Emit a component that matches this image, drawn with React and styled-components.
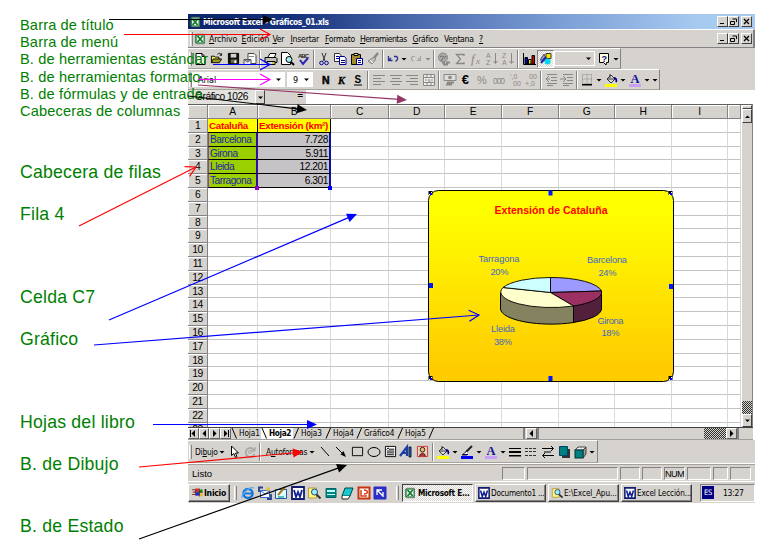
import React from "react";
import styled, { createGlobalStyle, css } from "styled-components";

const GREY = "#d6d3ce";
const UI = `"DejaVu Sans Condensed","DejaVu Sans",sans-serif`;
const ARIAL = `"Liberation Sans",Arial,sans-serif`;

const Global = createGlobalStyle`
  *{box-sizing:border-box}
  body{margin:0;background:#fff;overflow:hidden}
  svg{overflow:visible}
`;

const Page = styled.main`
  position: relative; width: 775px; height: 560px; background: #fff;
  display: grid; grid-template-columns: 188px 567px; align-items: start; padding-top: 14px;
`;
const Notes = styled.aside`
  position: relative; z-index: 3; padding: 3px 0 0 20px; color: #008000;
  font-family: ${ARIAL}; white-space: nowrap;
`;
const SmallNote = styled.p`margin: 0; font-size: 14.6px; line-height: 17.2px; height: 17.2px; letter-spacing: .14px;`;
const BigNote = styled.p`margin: ${p => p.$gap}px 0 0; font-size: 17.7px; line-height: 20px; letter-spacing: .2px;`;

const Window = styled.section`width: 567px; height: 488px; display: flex; flex-direction: column; font-family: ${UI}; font-size: 8.5px; color: #000;`;

const TitleBar = styled.header`
  height: 15px; flex: none; display: flex; align-items: center; padding: 0 3px 0 2px;
  background: linear-gradient(90deg,#0a246a 0%,#14307a 18%,#4766aa 38%,#7c9fd6 66%,#a6caf0 90%);
  color: #fff; font-weight: bold; font-size: 8.4px; letter-spacing: -.35px; gap: 1px; white-space: pre;
`;
const Spring = styled.div`flex: 1;`;
const WinButtons = styled.div`display: flex; & > :last-child{margin-left:2px}`;
const WinButton = styled.span`
  width: 11px; height: 11px; background: ${GREY}; border: 1px solid; border-color: #fff #404040 #404040 #fff;
  display: grid; place-items: center;
`;
const MenuBar = styled.nav`
  height: 19px; flex: none; background: ${GREY}; display: flex; align-items: center; padding: 0 1px 0 2px;
  border-top: 1px solid #fff; border-bottom: 1px solid #848284; border-right: 2px solid #848284; white-space: nowrap;
`;
const MenuItem = styled.span`width: ${p => p.$w}px; font-size: 8.6px; letter-spacing: ${p => p.$ls || 0}px; u{text-underline-offset:1px}`;
const Grip = styled.i`width: 3px; height: 14px; flex: none; border-left: 1px solid #fff; border-right: 1px solid #848284; margin-right: ${p => p.$r || 0}px;`;

const ToolArea = styled.div`background: ${GREY}; flex: none; height: ${p => p.$h}px; display: flex;`;
const Toolbar = styled.div`
  width: ${p => p.$w}px; height: 100%; display: flex; align-items: center; padding-left: 1px;
  border-top: 1px solid #fff; border-bottom: 1px solid #a5a29c; border-right: 1px solid #848284; font-size: 8.4px;
`;
const Slot = styled.span`
  width: ${p => p.$w}px; flex: none; height: 18px; display: flex; align-items: center; justify-content: center;
  svg{display:block;flex:none}
  ${p => p.$on && css`background: repeating-conic-gradient(#fff 0 25%,${GREY} 0 50%) 0 0/2px 2px; border:1px solid;border-color:#848284 #fff #fff #848284;`}
`;
const Bar = styled.i`width: 2px; height: 18px; flex: none; margin: 0 1px; border-left: 1px solid #848284; border-right: 1px solid #fff;`;
const Field = styled.span`
  width: ${p => p.$w}px; height: 15px; flex: none; display: flex; align-items: center; justify-content: space-between;
  border: 1px solid #fff; padding: 0 2px 0 5px; background: ${p => (p.$flat ? GREY : "#fff")}; margin-right: ${p => p.$r || 0}px; font-size: 9px;
`;
const Caption = styled.span`width: ${p => p.$w}px; flex: none; white-space: nowrap; letter-spacing: ${p => p.$ls || 0}px; padding-left: ${p => p.$l || 0}px;`;

const FormulaRow = styled.div`height: 14px; flex: none; display: flex; width: 118px; background: ${GREY};`;
const NameBox = styled.span`width: 67px; background: #e4e2de; font: 10.2px/14px ${ARIAL}; padding-left: 7px; letter-spacing: -.45px; white-space: nowrap;`;
const NameDrop = styled.span`width: 10px; border: 1px solid; border-color: #fff #404040 #404040 #fff; display: grid; place-items: center; margin-right: 32px;`;

const SheetArea = styled.div`width: 565px; height: 323px; flex: none; display: flex; border-top: 1px solid #606060; border-right: 1px solid #848284; position: relative;`;
const Sheet = styled.div`
  width: 553px; height: 322px; overflow: hidden; display: grid;
  grid-template-columns: 20px 50px 73px 58px 56px 57px 57px 56px 57px 56px 13px;
  grid-template-rows: 14px; grid-auto-rows: 13.8px; font: 10.2px/13px ${ARIAL};
`;
const Head = styled.div`
  background: ${GREY}; border-right: 1px solid #848284; border-bottom: 1px solid #848284;
  box-shadow: inset 1px 1px #fff; text-align: center; line-height: 14px; font-size: 10.3px; letter-spacing: -.5px;
`;
const Cell = styled.div`
  border-right: 1px solid #d8d8d8; border-bottom: 1px solid #c4c4c4; padding: 0 1px; white-space: nowrap; letter-spacing: -.05px;
  ${p => p.$kind && css`border-color:#000;`}
  ${p => p.$kind === "title" && css`background:#ff0;color:#f00;font-weight:bold;font-size:9.8px;letter-spacing:-.3px;line-height:14px;border-width:0 1px 1px 0;`}
  ${p => p.$kind === "name" && css`background:#9acf00;color:#2424a8;letter-spacing:-.5px;line-height:14px;border-right:2px solid #30109a;border-left:1px solid #93c;`}
  ${p => p.$kind === "value" && css`background:#c6c3c6;text-align:right;letter-spacing:-.45px;line-height:14px;border-right:2px solid #1010a0;`}
`;
const Handle = styled.i`position: absolute; width: 4px; height: 4px; left: ${p => p.$x}px; top: ${p => p.$y}px; background: ${p => p.$c};`;
const VScroll = styled.div`width: 11px; display: flex; flex-direction: column; background: ${GREY}; border-left: 1px solid #fff;`;
const VButton = styled.span`
  height: ${p => p.$h}px; flex: none; border: 1px solid; border-color: #fff #404040 #404040 #fff; display: grid; place-items: center;
`;
const Checker = styled.span`width: ${p => p.$w}px; height: ${p => p.$h}px; flex: none; background: repeating-conic-gradient(#303030 0 25%,#d6d3ce 0 50%) 0 0/2px 2px;`;
const ChartBox = styled.div`position: absolute; left: 239px; top: 84px; width: 247px; height: 193px; svg{display:block}`;

const Tabs = styled.div`width: 565px; height: 13px; flex: none; display: flex; background: ${GREY}; align-items: stretch; font-size: 8.2px; border-bottom: 1px solid #a0a0a0; border-top: 1px solid #404040;`;
const NavButton = styled.span`width: ${p => p.$w || 11}px; flex: none; display: grid; place-items: center; border: 1px solid; border-color: #fff #606060 #606060 #fff;`;
const Tab = styled.span`
  width: ${p => p.$w}px; flex: none; display: flex; gap: 2px; line-height: 11px; white-space: nowrap; letter-spacing: ${p => (p.$on ? -0.35 : -0.1)}px;
  font-weight: ${p => (p.$on ? "bold" : "normal")}; background: ${p => (p.$on ? "#fff" : GREY)};
  svg{flex:none}
`;
const Track = styled.span`width: ${p => p.$w}px; flex: none; border-left: 2px solid #848284;`;

const Status = styled.footer`height: 17px; flex: none; margin-top:1px; background: ${GREY}; display: flex; align-items: center; padding-left: 4px; font: 9.5px ${ARIAL}; border-top: 1px solid #a5a29c;`;
const StatusCell = styled.span`width: ${p => p.$w}px; height: 13px; margin-right: ${p => p.$r || 2}px; border: 1px solid; border-color: #848284 #fff #fff #848284; display: flex; justify-content: center; line-height: 12px; font-size: 9.2px; white-space:nowrap; letter-spacing:-.6px;`;
const Taskbar = styled.div`height: 22px; flex: none; background: ${GREY}; border-top: 1px solid #fff; display: flex; align-items: center;`;
const Start = styled.span`width: 42px; height: 18px; border: 1px solid; border-color: #fff #404040 #404040 #fff; display: flex; align-items: center; padding-left: 3px; gap: 1px; font-weight: bold; font-size: 8.6px; letter-spacing: -.25px; margin-right: 4px; box-shadow: inset -1px -1px #848284;`;
const Task = styled.span`
  width: 71px; flex: none; height: 18px; margin-right: 2px; display: flex; align-items: center; gap: 1px; padding-left: 2px; white-space: nowrap;
  border: 1px solid; border-color: #fff #404040 #404040 #fff; box-shadow: inset -1px -1px #848284; font-size: 8.2px; letter-spacing: ${p => p.$ls || 0}px;
  ${p => p.$on && css`font-weight:bold;border-color:#404040 #fff #fff #404040;box-shadow:none;background:repeating-conic-gradient(#fff 0 25%,${GREY} 0 50%) 0 0/2px 2px;`}
  svg{flex:none}
`;
const Tray = styled.span`width: 55px; height: 18px; margin-left: 6px; border: 1px solid; border-color: #848284 #fff #fff #848284; display: flex; align-items: center; padding-left: 1px; gap: 9px; letter-spacing: -.3px;`;
const Lang = styled.span`width: 12px; height: 13px; background: #000084; color: #fff; font: 7.5px/13px ${UI}; text-align: center; letter-spacing: -.3px;`;
const Overlay = styled.svg`position: absolute; left: 0; top: 0; z-index: 4; pointer-events: none;`;

const G = "#8a8884";
const P = (d, s = "#000", f = "none", w = 1) => <path d={d} stroke={s} fill={f} strokeWidth={w} />;
const lines = (rows, c = G) => rows.map(([x, y, w], i) => <rect key={i} x={x} y={y} width={w} height="1" fill={c} />);
const letter = (t, x, y, size, fill, extra = {}) => (
  <text x={x} y={y} fontSize={size} fill={fill} fontFamily="Liberation Serif" {...extra}>{t}</text>
);
const tiny = (t, x, y, size = 7) => <text x={x} y={y} fontSize={size} fill={G} fontFamily="Liberation Sans">{t}</text>;
const sheetIcon = <>{P("M2 1.5h9v11h-9z", "#666", "#fff")}{P("M3 3.5l6 7M9 3.5l-6 7", "#087c28", "none", 2)}{P("M.5 2.5h10v9H.5z", "#087c28")}</>;

const icons = {
  excel: sheetIcon,
  new: P("M3 1.5h6l3 3v8H3zM9 1.5v3h3", "#000", "#fff"),
  open: <>{P("M1.5 11.5v-7h3l1 1h4v2", "#000", "#f8f060")}{P("M1.5 11.5l2-4h9l-2.5 4z", "#000", "#a09a20")}{P("M8 2.5c2-2 4-1 4 1M10.5 3.5h2v-2")}</>,
  save: <>{P("M1.5 1.5h11v11h-11z", "#000", "#101010")}<rect x="4" y="2" width="6" height="4" fill={GREY} /><rect x="4" y="8" width="7" height="4" fill="#676740" /><rect x="8" y="9" width="2" height="3" fill="#fff" /></>,
  mail: <>{P("M5 1.5h6l2 2v8H5z", "#444", "#fff")}{P("M1 7.5h7v5H1zM1 7.5l3.5 2.5L8 7.5", "#555", "#e8e8f8")}{P("M6 4.5h5", "#888")}</>,
  print: <>{P("M4 5l2-3.5h6L10.5 5", "#000", "#fff")}{P("M1 5.5h11l1 1v4H1z", "#000", "#c0c0b8")}{P("M3 9.5h8v3H3z", "#000", "#ddd")}{P("M8 11h2", "#cc0", "none", 1.5)}</>,
  preview: <>{P("M1.5 .5h6l3 3v9h-9z", "#000", "#fff")}<circle cx="9" cy="7.5" r="3" fill="#aee" stroke="#000" />{P("M11 10l3 3", "#000", "none", 2)}</>,
  spell: <><text x="1" y="5.5" fontSize="6" fontWeight="bold" fontFamily="Liberation Sans" fill="#222" textLength="11">ABC</text>{P("M3 8l3 4 5-6", "#2828b0", "none", 2)}</>,
  cut: <>{P("M5 1l3 8M9 1L6 9", "#333")}<circle cx="4.5" cy="11" r="1.8" fill="none" stroke="#000090" /><circle cx="9.5" cy="11" r="1.8" fill="none" stroke="#000090" /></>,
  copy: <>{P("M1.5 1.5h5l1.5 2v6H1.5z", "#333", "#fff")}{P("M6.5 4.5h5l1.5 2v6H6.5z", "#000090", "#fff")}{P("M3 4.5h3M3 6.5h3M8 8.5h4M8 10.5h4", "#000090")}</>,
  paste: <>{P("M1.5 2.5h9v10h-9z", "#000", "#a58e28")}{P("M4 1.5h4v2H4z", "#000", "#ee6")}{P("M6.5 6.5h6v6h-6z", "#000090", "#fff")}{P("M8 8.5h3M8 10.5h3", "#000090")}</>,
  brush: <>{P("M12 1L8 6", G, "none", 2.5)}{P("M8 5l2 2-4 5-4-3z", G, "#bbb")}{P("M4 8l3 3", "#fff")}</>,
  undo: P("M2.5 4v4.5h4M3 8l2-2M8 4.5h2.5l1 1v2l-2 2", "#283090", "none", 1.3),
  redo: P("M11.5 4v4.5h-4M11 8L9 6M6 4.5H3.5l-1 1v2l2 2", "#a8a6a2", "none", 1.2),
  globe: <><circle cx="6" cy="5.5" r="4.5" fill="#aaa" stroke={G} />{P("M3 5c2-3 5 3 6-1M4 9l2-3", "#666")}{P("M5 10.5h3m1 0h4M6 12.5h5", G, "none", 2)}</>,
  sigma: P("M11 4V2.5H3.5L7.5 7l-4 4.5H11V10", G, "none", 1.3),
  fx: <>{letter("f", 2, 11, 13, G, { fontStyle: "italic" })}{letter("x", 7, 12, 9, G, { fontStyle: "italic" })}</>,
  az: <>{tiny("A", 1, 6)}{tiny("Z", 1, 13)}{P("M10.5 1v10M8.5 9l2 2.5 2-2.5", G)}</>,
  za: <>{tiny("Z", 1, 6)}{tiny("A", 1, 13)}{P("M10.5 1v10M8.5 9l2 2.5 2-2.5", G)}</>,
  chart: <>{P("M1.5 1v11.5H14", "#000")}{P("M3 5.5h2.5V12H3z", "#000", "#00c")}{P("M6.5 7.5H9V12H6.5z", "#000", "#ee0")}{P("M10 3.5h2.5V12H10z", "#000", "#c00")}</>,
  draw: <>{P("M7 1.5h5v5H7z", "#333", "#f5e800")}{P("M1 8l4-6 3 6z", "#555", "#99c")}<circle cx="8.5" cy="9.5" r="3" fill="#00d8e8" />{P("M2 11l5-6", "#22a", "none", 2)}</>,
  help: <>{P("M2.5 1.5h9v9l-2 0-.5 2.5-2.5-2.5h-4z", "#000", "#fffde0")}<text x="4.5" y="9.5" fontSize="9" fontWeight="bold" fill="#00008b" fontFamily="Liberation Sans">?</text></>,
  left: lines([[1, 2, 12], [1, 5, 8], [1, 8, 12], [1, 11, 8]]),
  center: lines([[1, 2, 12], [3, 5, 8], [1, 8, 12], [3, 11, 8]]),
  right: lines([[1, 2, 12], [5, 5, 8], [1, 8, 12], [5, 11, 8]]),
  merge: <>{P("M1.5 1.5h11v11h-11zM1.5 4.5h11M1.5 9.5h11M5 1.5v3M9 1.5v3M5 9.5v3M9 9.5v3", G, "#eee")}{P("M3 7h2M9 7h2", G)}{tiny("a", 5.5, 9, 5.5)}</>,
  money: <>{P("M1 1.5h12v6H1z", G, "#ddd")}<circle cx="7" cy="4.5" r="1.8" fill={G} />{P("M4 9.5h7M3 11.5h6", G, "none", 1.8)}</>,
  euro: <text x="2" y="12" fontSize="14" fontWeight="bold" fontFamily="Liberation Sans">€</text>,
  pct: tiny("%", 2, 11, 11),
  thousand: <text x="1" y="10.5" fontSize="8.5" textLength="12" fill={G} fontFamily="Liberation Sans">000</text>,
  inc: <>{tiny("‘,0", 2, 6)}{tiny("00", 5, 13)}</>,
  dec: <>{tiny("00", 5, 6)}{tiny("+,0", 1, 13)}</>,
  outdent: <>{lines([[3, 1, 10], [7, 4, 6], [7, 7, 6], [3, 10, 10], [3, 12, 6]])}{P("M5 3L2 6l3 3M2 6h4", G)}</>,
  indent: <>{lines([[3, 1, 10], [7, 4, 6], [7, 7, 6], [3, 10, 10], [3, 12, 6]])}{P("M3 3l3 3-3 3M0 6h6", G)}</>,
  borders: <><path d="M2.5 1.5h9v9h-9zM7 1.5v9M2.5 6h9" stroke={G} fill="none" strokeDasharray="1 1" /><rect x="2" y="11" width="10" height="1.5" /></>,
  bucket: <>{P("M3 6l4-4 4 4-4 4z", "#333", "#ddd")}{P("M6 5V1M3 6h8", "#333")}{P("M10 5c2 0 3 2 2 4", "#000090", "none", 1.8)}<rect x="1" y="11" width="12" height="3" fill="#ff0" /></>,
  pen: <>{P("M12 1L6 7", "#222", "none", 2)}{P("M7 6L2 10h5", "#222", "#fff")}{P("M3 9.5h5", "#000090")}<rect x="1" y="11" width="12" height="3" fill="#00f" /></>,
  fontA: <>{letter("A", 2.5, 10, 12.5, "#12129a", { fontWeight: "bold" })}<rect x="1" y="11" width="12" height="3" fill="#c8a0f8" /></>,
  bold: <text x="3" y="10.8" fontSize="10.5" fontWeight="bold" fontFamily="Liberation Sans" stroke="#000" strokeWidth=".5">N</text>,
  italic: <text x="3" y="10.8" fontSize="10.5" fontWeight="bold" fontStyle="italic" fontFamily="Liberation Serif" stroke="#000" strokeWidth=".3">K</text>,
  under: <><text x="3.5" y="10" fontSize="10" fontWeight="bold" fontFamily="Liberation Sans">S</text><rect x="3" y="11.5" width="8" height="1" /></>,
  dd: <path d="M4.5 6h5L7 8.5z" />,
  ddg: <path d="M4.5 6h5L7 8.5z" fill={G} />,
  pointer: P("M4.5 1v9.5l2.3-2 1.7 4 1.5-.8-1.5-3.7h3z", "#000", "#fff"),
  rotate: <>{P("M11 5A4.5 4.5 0 1 0 11.5 9", "#aaa", "none", 1.8)}{P("M12 2v4H8", "#999")}<circle cx="7" cy="7" r="1.5" fill="none" stroke="#aaa" /></>,
  line: P("M3 2l8 9"),
  arrow: <>{P("M2 2l7 7")}<path d="M12 12L6.5 9.5 9.5 6z" /></>,
  rect: P("M1.5 2.5h11v9h-11z"),
  oval: <ellipse cx="7" cy="7" rx="6" ry="4.5" fill="none" stroke="#000" />,
  textbox: <>{P("M1.5 1.5h11v11h-11z", "#000", "#fff")}{lines([[6, 4, 5], [3, 6, 8], [3, 8, 8], [3, 10, 8]], "#000")}{P("M3 5l1.5-2L6 5", "#000")}</>,
  wordart: <>{P("M1 11L8 2v9M3 8h5", "#1c3ca8", "none", 2.2)}{P("M10 2h2v10h-2z", "#123", "#2c5cc8")}</>,
  clip: <>{P("M1.5 1.5h11v11h-11z", "#c33", "#eecfc0")}{P("M4 12.5c0-5 6-5 6 0", "#222", "#b33")}<circle cx="7" cy="5" r="2.5" fill="#eb6" stroke="#222" /></>,
  weight: <>{lines([[1, 3, 12]], "#000")}<rect x="1" y="6" width="12" height="2" /><rect x="1" y="10" width="12" height="1.5" /></>,
  dash: <path d="M1 3.5h12M1 6.5h12M1 10.5h12" stroke="#333" strokeDasharray="3 1" />,
  arrows: P("M1 3.5h11M10 1l2.5 2.5L10 6M13 10.5H2M4 8l-2.5 2.5L4 13M3 7h7"),
  shadow: <><rect x="5" y="4" width="8" height="9" fill="#333" />{P("M2.5 1.5h8v9h-8z", "#046", "#008080")}</>,
  cube: <>{P("M2 5l3-3h8l-3 3z", "#444", "#eee")}{P("M10 5l3-3v7l-3 4z", "#444", "#999")}<rect x="2" y="5" width="8" height="8" fill="#008080" stroke="#033" /></>,
  flag: <><rect x="5" y="2" width="4" height="4" fill="#e22" /><rect x="10" y="3" width="3.5" height="4" fill="#189a30" /><rect x="5" y="7" width="4" height="4" fill="#22d" /><rect x="10" y="8" width="3.5" height="4" fill="#eb2" />{P("M9.5 2v10M4.5 6.5h9M4.5 2v9", "#000", "none", .8)}{P("M0 3.5h4M1 6.5h3M0 9.5h4", "#933", "none", 1.5)}</>,
  ie: <><circle cx="7" cy="7.5" r="4.5" fill="none" stroke="#1676d8" strokeWidth="2.5" />{P("M4 7.5h7", "#1676d8", "none", 2)}{P("M1 12C0 8 9 0 13 2", "#58a8f0", "none", 1.2)}</>,
  outlook: <>{P("M2.5 4.5h9v7h-9z", "#36c", "#fff")}{P("M2.5 4.5L7 8l4.5-3.5", "#36c")}{P("M1 6V1.5h4M13 8v5H9", "#248", "none", 1.8)}<circle cx="10" cy="3" r="2" fill="#e8c040" /></>,
  desk: <>{P("M1.5 3.5h11v9h-11z", "#25a", "#dff")}{P("M4 9L11 1", "#a72", "none", 2)}{P("M4 11h6", "#3aa", "none", 1.5)}</>,
  word: <>{P("M1 1h12v12H1z", "#111c70", "#fff", 1.8)}{P("M3 4l2 7 2-5 2 5 2-7", "#102090", "none", 1.8)}</>,
  find: <>{P("M1.5 2h8v10h-8z", "#b94", "#fffa80")}<circle cx="7.5" cy="6" r="3" fill="#9ef0f8" stroke="#247" />{P("M9.5 8.5l4 4", "#333", "none", 2)}</>,
  calc: <>{P("M2 2.5h10v9H2z", "#066", "#008484")}<rect x="3" y="4" width="8" height="2" fill="#bff" />{P("M3 8.5h8", "#cff", "none", 1)}</>,
  book: <>{P("M5 2h8l-3 8H2z", "#044", "#18c8d0")}{P("M2 10v3h6l2-3", "#222", "#fff")}</>,
  ppt: <>{P("M1.5 1.5h11v11h-11z", "#c63510", "#fff", 2)}{P("M4 4v6h6M7 4c5 0 4 4 0 4", "#d84018", "none", 1.5)}</>,
  link: <>{P("M1 1h12v12H1z", "#2828c0", "#2c30c8")}{P("M4 9V4h5M4 4l6 6M10 6v5", "#fff", "none", 1.3)}</>,
};
const Icon = ({ n, s = 14 }) => <svg width={s} height={s} viewBox="0 0 14 14">{icons[n]}</svg>;
const Row = ({ items }) => items.map(([n, w, on], i) =>
  n === "|" ? <Bar key={i} /> : <Slot key={i} $w={w} $on={on}><Icon n={n} s={["euro", "open", "save", "textbox", "rect", "clip"].includes(n) ? 13 : 14} /></Slot>
);
const Tri = ({ d = "down", stop }) => {
  const r = { down: 0, left: 90, up: 180, right: 270 }[d];
  return <svg width="7" height="7" viewBox="0 0 7 7"><g transform={`rotate(${r} 3.5 3.5)`}><path d="M0 2h7L3.5 5.5z" />{stop && <rect x="0" y="6" width="7" height="1" />}</g></svg>;
};
const SmallTri = ({ up }) => <svg width="7" height="7" viewBox="0 0 7 7"><path d={up ? "M1 5h5L3.5 2.5z" : "M1 2.5h5L3.5 5z"} /></svg>;
const Controls = () => (
  <WinButtons>
    <WinButton><svg width="7" height="7"><rect x="1" y="5" width="4" height="1" /></svg></WinButton>
    <WinButton><svg width="7" height="7">{P("M2.5 1h4v3M.5 3.5h4v3h-4z")}</svg></WinButton>
    <WinButton><svg width="7" height="7">{P("M1 1l5 5M6 1L1 6", "#000", "none", 1.3)}</svg></WinButton>
  </WinButtons>
);

const menus = [["A", "rchivo", 32.5, "", -.1], ["E", "dición", 31, "", 0], ["V", "er", 18, "", -.3], ["I", "nsertar", 34.5, "", -.2], ["F", "ormato", 35, "", -.3], ["H", "erramientas", 52.5, "", -.5], ["G", "ráfico", 31.5, "", -.3], ["n", "tana", 35, "Ve", -.3], ["?", "", 10, "", 0]];
const data = [["Barcelona", "7.728"], ["Girona", "5.911"], ["Lleida", "12.201"], ["Tarragona", "6.301"]];

const Chart = () => (
  <svg width="247" height="193" viewBox="427 189 247 193" fontFamily="Liberation Sans">
    <defs><linearGradient id="sun" x1="0" y1="0" x2="0" y2="1"><stop offset=".1" stopColor="#ff0" /><stop offset=".92" stopColor="#fc0" /></linearGradient></defs>
    <rect x="428.5" y="190.5" width="245" height="191" rx="10" fill="url(#sun)" stroke="#000" />
    <text x="551" y="214" fontSize="11" fontWeight="bold" fill="#f00" textAnchor="middle" textLength="113" lengthAdjust="spacingAndGlyphs">Extensión de Cataluña</text>
    <path d="M500.5 293v16A50.5 15.5 0 0 0 573.5 322.5V306z" fill="#84825f" stroke="#000" />
    <path d="M573.5 306v16.5A50 15.5 0 0 0 601.5 309V292z" fill="#52203a" stroke="#000" />
    <g stroke="#000" strokeWidth=".9">
      <path d="M550.5 292.5V277.5A50.7 15.5 0 0 1 601.5 291z" fill="#9c9aff" />
      <path d="M550.5 292.5L601.5 291A50.7 15.5 0 0 1 573.5 306z" fill="#9c3063" />
      <path d="M550.5 292.5L573.5 306A50.7 15.5 0 0 1 503 287.5z" fill="#ffffce" />
      <path d="M550.5 292.5L503 287.5A50.7 15.5 0 0 1 550.5 277.5z" fill="#ceffff" />
    </g>
    <g fontSize="9.3" fill="#3f68c4" textAnchor="middle">
      <text x="499" y="262" textLength="41">Tarragona</text><text x="499.5" y="275" textLength="18">20%</text>
      <text x="607" y="262.5" textLength="40">Barcelona</text><text x="607.5" y="275.5" textLength="18">24%</text>
      <text x="503" y="332" textLength="24">Lleida</text><text x="503" y="345" textLength="18">38%</text>
      <text x="610.5" y="324" textLength="26">Girona</text><text x="610.5" y="336" textLength="18">18%</text>
    </g>
    {[[431, 193], [671, 193], [431, 378], [671, 378]].map(([x, y]) => <g key={x + "-" + y}><rect x={x - 2.5} y={y - 2} width="4" height="4" fill="#000" /><path d={`M${x - 2} ${y + 2}l3-3`} stroke="#fff" /><rect x={x - 1} y={y} width="2" height="2" fill="#00f" /></g>)}
    {[[550.5, 193], [550.5, 378.5], [431, 285.5], [671, 286.5]].map(([x, y]) => <rect key={x + "-" + y} x={x - 2} y={y - 2.5} width="4" height="5" fill="#0018ff" />)}
  </svg>
);

const arrowData = [
  [109, 19.5, 273, 19.5, "#000", 1], [124, 34.5, 270, 34.5, "#f00", 0], [213, 64.5, 270, 64.5, "#00f", 0],
  [198, 79.5, 270, 79.5, "#f0f", 0], [198, 85, 407, 100, "#943463", 1], [188, 96, 307, 110, "#000", 1],
  [79, 226, 196, 167, "#f00", 0], [109, 320, 357, 214, "#00f", 1], [94, 345, 479, 315, "#00f", 0],
  [153, 424.5, 317, 424.5, "#00f", 1], [139, 467, 303, 452, "#f00", 1], [139, 539, 347, 465, "#000", 1],
];
const Arrow = ({ a: [x1, y1, x2, y2, c, solid] }) => {
  const ang = (Math.atan2(y2 - y1, x2 - x1) * 180) / Math.PI;
  const len = Math.hypot(x2 - x1, y2 - y1);
  return (
    <g transform={`translate(${x1} ${y1}) rotate(${ang})`} stroke={c} fill="none" strokeWidth="1.2">
      <path d={`M0 0H${len - (solid ? 8 : 0)}`} />
      {solid ? <path d={`M${len} 0l-10-4.5v9z`} fill={c} stroke="none" /> : <path d={`M${len - 10} -5.5L${len} 0l-10 5.5`} />}
    </g>
  );
};
const Slash = ({ back }) => <svg width="6" height="11">{P(back ? "M1 0l4.5 10.5" : "M5.5 0L1 10.5")}</svg>;

export default function App() {
  return (
    <Page>
      <Global />
      <Notes>
        {["Barra de título", "Barra de menú", "B. de herramientas estándar", "B. de herramientas formato", "B. de fórmulas y de entrada", "Cabeceras de columnas"].map(t => <SmallNote key={t}>{t}</SmallNote>)}
        {[["Cabecera de filas", 41.8], ["Fila 4", 22], ["Celda C7", 63], ["Gráfico", 22], ["Hojas del libro", 63], ["B. de Dibujo", 22], ["B. de Estado", 42]].map(([t, g]) => <BigNote key={t} $gap={g}>{t}</BigNote>)}
      </Notes>
      <Window>
        <TitleBar><Icon n="excel" s={12} />Microsoft Excel - Gráficos_01.xls<Spring /><Controls /></TitleBar>
        <MenuBar>
          <Grip /><Slot $w={16}><Icon n="excel" s={12} /></Slot>
          {menus.map(([u, r, w, pre, ls]) => <MenuItem key={u + r} $w={w} $ls={ls}>{pre}<u>{u}</u>{r}</MenuItem>)}
          <Spring /><Controls />
        </MenuBar>
        <ToolArea $h={21}>
          <Toolbar $w={433}>
            <Grip />
            <Row items={[["new", 16], ["open", 17], ["save", 16], ["mail", 17], ["|"], ["print", 17], ["preview", 16], ["spell", 17], ["|"], ["cut", 16], ["copy", 16], ["paste", 17], ["brush", 16], ["|"], ["undo", 15], ["dd", 8], ["redo", 16], ["ddg", 8], ["|"], ["globe", 16], ["sigma", 16], ["fx", 16], ["az", 16], ["za", 16], ["|"], ["chart", 17], ["draw", 17, 1]]} />
            <Field $w={41} $flat><i /><SmallTri /></Field>
            <Row items={[["help", 17], ["dd", 8]]} />
          </Toolbar>
        </ToolArea>
        <ToolArea $h={21}>
          <Toolbar $w={472}>
            <Grip /><Field $w={93} $r={2}>Arial<SmallTri /></Field><Field $w={26} $r={5}>9<SmallTri /></Field>
            <Row items={[["bold", 16], ["italic", 16], ["under", 16], ["|"], ["left", 17], ["center", 17], ["right", 16], ["merge", 17], ["|"], ["money", 17], ["euro", 16], ["pct", 16], ["thousand", 17], ["inc", 16], ["dec", 16], ["|"], ["outdent", 16], ["indent", 16], ["|"], ["borders", 16], ["dd", 8], ["bucket", 16], ["dd", 8], ["fontA", 16], ["dd", 8], ["dd", 8]]} />
          </Toolbar>
        </ToolArea>
        <FormulaRow><NameBox>Gráfico 1026</NameBox><NameDrop><SmallTri /></NameDrop><b>=</b></FormulaRow>
        <SheetArea>
          <Sheet>
            {["", ..."ABCDEFGHI", " "].map((h, i) => <Head key={i}>{h}</Head>)}
            {Array.from({ length: 23 }, (_, r) => (
              <React.Fragment key={r}>
                <Head>{r + 1}</Head>
                {Array.from({ length: 10 }, (_, c) => {
                  if (r === 0 && c < 2) return <Cell key={c} $kind="title">{c ? "Extensión (km²)" : "Cataluña"}</Cell>;
                  if (r > 0 && r < 5 && c < 2) return <Cell key={c} $kind={c ? "value" : "name"}>{data[r - 1][c]}</Cell>;
                  return <Cell key={c} />;
                })}
              </React.Fragment>
            ))}
          </Sheet>
          <VScroll>
            <VButton $h={4} /><VButton $h={14}><SmallTri up /></VButton><Spring /><Checker $w={10} $h={13} /><VButton $h={13}><SmallTri /></VButton>
          </VScroll>
          <Handle $x={67} $y={81} $c="#90c" /><Handle $x={140} $y={81} $c="#00f" />
          <ChartBox><Chart /></ChartBox>
        </SheetArea>
        <Tabs>
          <NavButton><Tri d="left" stop /></NavButton><NavButton $w={10}><Tri d="left" /></NavButton><NavButton $w={11}><Tri d="right" /></NavButton><NavButton $w={11}><Tri d="right" stop /></NavButton>
          <Tab $w={30}><Slash back />Hoja1</Tab><Tab $w={32} $on><Slash back />Hoja2</Tab>
          <Tab $w={32}><Slash />Hoja3</Tab><Tab $w={31}><Slash />Hoja4</Tab><Tab $w={41}><Slash />Gráfico4</Tab><Tab $w={31}><Slash />Hoja5</Tab>
          <Tab $w={95}><Slash /></Tab>
          <Track $w={3} /><NavButton $w={11}><Tri d="left" /></NavButton><Track $w={167} /><Checker $w={22} $h={11} /><NavButton $w={11}><Tri d="right" /></NavButton><Track $w={3} />
        </Tabs>
        <ToolArea $h={23}>
          <Toolbar $w={410}>
            <Grip $r={3} /><Caption $w={22} $ls={-.25}>Di<u>b</u>ujo</Caption>
            <Row items={[["dd", 9], ["pointer", 16], ["rotate", 16], ["|"]]} />
            <Caption $w={46} $l={4} $ls={-.25}>A<u>u</u>toformas</Caption>
            <Row items={[["dd", 8], ["line", 17], ["arrow", 16], ["rect", 16], ["oval", 17], ["textbox", 16], ["wordart", 16], ["clip", 17], ["|"], ["bucket", 16], ["dd", 8], ["pen", 16], ["dd", 8], ["fontA", 16], ["dd", 8], ["weight", 16], ["dash", 16], ["arrows", 17], ["shadow", 15], ["cube", 17], ["dd", 8]]} />
          </Toolbar>
        </ToolArea>
        <Status>
          Listo<Spring />
          {[[23], [91], [20], [20], [21, "NUM"], [24], [15], [21, "", 4]].map(([w, t, r], i) => <StatusCell key={i} $w={w} $r={r}>{t}</StatusCell>)}
        </Status>
        <Taskbar>
          <Start><Icon n="flag" s={11} />Inicio</Start><Grip $r={3} />
          <Row items={["ie", "outlook", "desk", "word", "find", "calc", "book", "ppt", "link"].map((n, i) => [n, i % 2 ? 17 : 16])} />
          <Spring /><Grip $r={3} />
          <Task $on $ls={-.25}><Icon n="excel" s={12} />Microsoft E...</Task>
          <Task $ls={-.25}><Icon n="word" s={12} />Documento1 ...</Task>
          <Task $ls={-.1}><Icon n="find" s={12} />E:\Excel_Apu...</Task>
          <Task $ls={-.15}><Icon n="word" s={12} />Excel Lección...</Task>
          <Tray><Lang>ES</Lang>13:27</Tray>
        </Taskbar>
      </Window>
      <Overlay width="775" height="560">{arrowData.map((a, i) => <Arrow key={i} a={a} />)}</Overlay>
    </Page>
  );
}
